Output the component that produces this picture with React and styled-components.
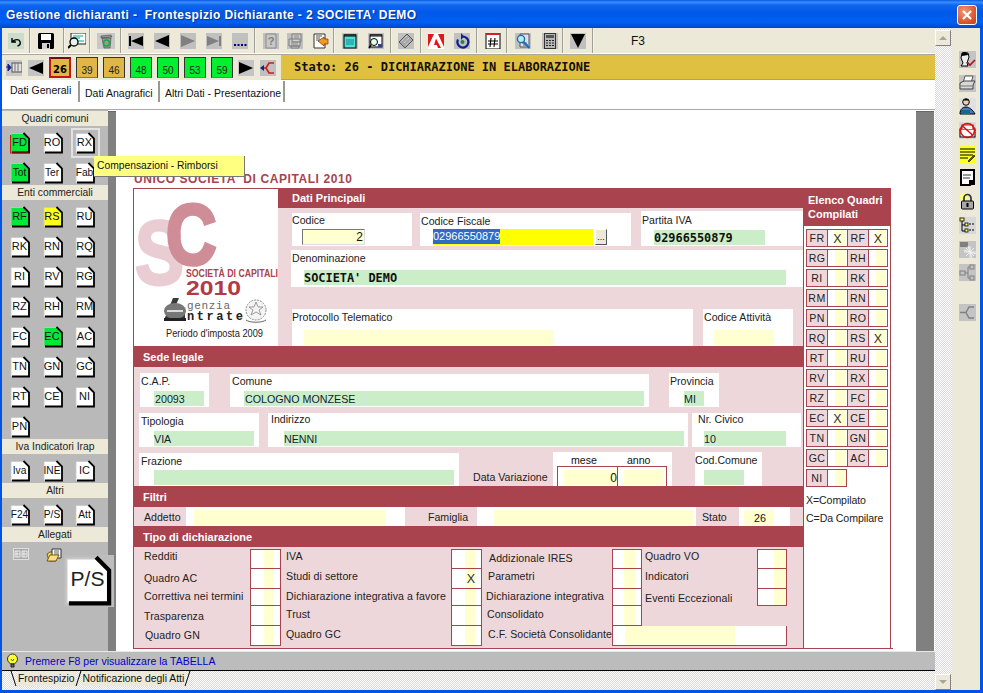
import React from "react";
import styled, { createGlobalStyle, css } from "styled-components";

const RED = "#a9434d";
const PINK = "#eed7da";
const GREEN = "#cbedc8";
const PALE = "#ffffcf";
const BEIGE = "#ece9d8";
const dither = "repeating-conic-gradient(#ffffff 0 25%, #dcdac8 0 50%) 0 0 / 2px 2px";

const Global = createGlobalStyle`
  html, body { margin: 0; padding: 0; background: #0054e3; }
  * { box-sizing: border-box; }
  body { font-family: "Liberation Sans", Arial, sans-serif; font-size: 10.6px; color: #111; }
`;

const Window = styled.div`
  width: 983px; height: 693px; display: flex; flex-direction: column; overflow: hidden;
  background: #0054e3; position: relative;
`;
const TitleBar = styled.div`
  height: 28px; flex: none; display: flex; align-items: center; justify-content: space-between;
  padding: 1px 6px 0 6px;
  background: linear-gradient(180deg, #0a5ae8 0, #3a8ffb 8%, #0f66ee 18%, #0058e8 45%, #0060f2 80%, #0246c8 100%);
`;
const TitleText = styled.div`
  color: #fff; font-weight: bold; font-size: 12px; letter-spacing: .39px; white-space: pre;
  text-shadow: 1px 1px 1px #0a2e9a;
`;
const CloseBtn = styled.div`
  width: 20px; height: 20px; border: 1px solid #fff; border-radius: 3px; display: grid; place-items: center;
  background: radial-gradient(circle at 35% 30%, #f09a78, #dd5a32 60%, #c23c1a);
`;
const Body = styled.div`
  flex: 1; display: flex; padding: 0 3px 3px 2px; min-height: 0;
`;
const Main = styled.div`
  width: 933px; display: flex; flex-direction: column; background: ${BEIGE};
`;
const ScrollTrack = styled.div`
  width: 17px; display: flex; flex-direction: column; justify-content: space-between;
  background: ${dither}; padding-top: 2px; padding-bottom: 0;
`;
const ScrollBtn = styled.div`
  width: 16px; height: 16px; background: ${BEIGE}; display: grid; place-items: center;
  border: 1px solid; border-color: #fff #808080 #808080 #fff;
`;
const Arrow = styled.div`
  width: 0; height: 0; border-left: 4px solid transparent; border-right: 4px solid transparent;
  ${p => p.$down ? css`border-top: 4px solid #a8a898;` : css`border-bottom: 4px solid #a8a898;`}
`;
const RightBar = styled.div`
  width: 28px; background: ${BEIGE}; display: flex; flex-direction: column; align-items: center;
  padding: 23px 0 0 2px; gap: 6.7px;
`;
const RightGap = styled.div` height: 9px; `;

const Toolbar = styled.div`
  height: 27px; flex: none; display: flex; align-items: flex-start; background: ${BEIGE};
  border-bottom: 1px solid #aca899; box-shadow: inset 0 -1px 0 #fff;
`;
const ToolGroup = styled.div`
  width: ${p => p.$w}px; height: 25px; padding-left: ${p => p.$pl}px; display: flex; align-items: center; gap: ${p => p.$gap || 0}px;
  border-right: 2px groove #f4f2e8;
`;
const FKey = styled.div` margin-left: 37px; height: 25px; display: flex; align-items: center; font-size: 12px; padding-top: 1px; `;

const NavRow = styled.div`
  height: 25px; flex: none; display: flex; align-items: center; padding-left: 4px; background: ${BEIGE};
`;
const NavSlot = styled.div` margin-left: ${p => p.$ml}px; display: flex; `;
const StepTile = styled.div`
  width: 22px; height: 21px; margin-left: ${p => p.$ml}px; display: flex; align-items: flex-end; justify-content: center;
  font-size: 10px; padding-bottom: 1px; color: #222;
  border: 1px solid #333; border-bottom-color: #777;
  background: ${p => p.$green ? "#00f030" : "#e0b646"};
  ${p => p.$on && css`border: 2px solid #c01818; border-top-color:#6a1010; font-weight: bold; color: #000; font-family: "DejaVu Sans", sans-serif;`}
`;
const StatusStrip = styled.div`
  flex: 1; height: 25px; margin-left: 5px; background: #e0c040; border-bottom: 1px solid #a8a080;
  font: bold 12px "DejaVu Sans Mono", monospace; color: #111; display: flex; align-items: center; padding-left: 13px;
  white-space: pre;
`;
const TabStrip = styled.div`
  height: 30px; flex: none; background: #fff; display: flex; padding-left: 2px; padding-top: 1px; align-items: flex-start;
  border-bottom: 1px solid #a8a8a8;
`;
const Tab = styled.div`
  width: ${p => p.$w}px; height: 21px; font-size: 10.5px; white-space: nowrap;
  padding: ${p => p.$on ? "3px 0 0 6px" : "6px 0 0 5px"};
  border-right: 2px solid #9a9a8e;
`;

const Workspace = styled.div`
  flex: 1; display: flex; position: relative; min-height: 0; background: #fff;
`;
const Sidebar = styled.div`
  width: 106px; flex: none; background: #b9b9b9; padding-top: 1px; position: relative; display: flex; flex-direction: column;
`;
const SideHead = styled.div`
  height: 15px; background: ${BEIGE}; text-align: center; font-size: 10.3px; line-height: 15px; color: #222;
`;
const SideGrid = styled.div`
  display: grid; grid-template-columns: repeat(3, 32.5px); column-gap: 0; row-gap: 8px; padding: 6px 0 1px 8px;
`;
const Tile = styled.div`
  width: 21px; height: 22px; display: grid; place-items: center; font-size: ${p => p.$small ? 10.2 : 11}px; color: #111;
  ${p => p.$hover && css`outline: 2px solid #e2e2e2; outline-offset: 2px;`}
  & > * { grid-area: 1 / 1; }
`;
const TileLabel = styled.span` padding: 0 2px 2px 0; white-space: nowrap; `;
const AttachRow = styled.div` display: flex; gap: 16px; padding: 6px 0 0 11px; `;
const BigPS = styled.div`
  position: absolute; left: 62px; top: 445px; width: 50px; height: 52px; background: #bdbdbd; z-index: 3;
  display: grid; place-items: center;
  & > * { grid-area: 1 / 1; }
`;
const BigLabel = styled.span` font-size: 21px; font-weight: 500; color: #222; padding: 0 3px 4px 0; `;
const Tooltip = styled.div`
  position: absolute; left: 92px; top: 46px; width: 151px; height: 21px; background: #ffff80; z-index: 4;
  border-bottom: 1px solid #777; border-right: 1px solid #777; font-size: 10.3px; padding: 4px 0 0 3px; white-space: nowrap;
`;
const Gutter = styled.div`
  width: ${p => p.$w}px; flex: none; background: #808080; margin-top: 1px; border-top: 1px solid #666;
`;
const Page = styled.div`
  width: 800px; flex: none; background: #fff; padding: 60px 0 0 17px; overflow: hidden;
`;
const DocTitle = styled.div`
  height: 18px; font-weight: bold; font-size: 12px; letter-spacing: .58px; color: ${RED}; line-height: 18px; padding-left: 1px; white-space: nowrap;
`;
const Form = styled.div`
  width: 760px; height: 461px; display: flex; border-bottom: 1px solid ${RED};
`;
const LeftCol = styled.div`
  width: 670px; flex: none; background: ${PINK}; display: flex; flex-direction: column; border-left: 1px solid ${RED};
`;
const TopBlock = styled.div` height: 158px; display: flex; flex: none; `;
const LogoCell = styled.div`
  width: 144px; flex: none; background: #fff; border-top: 1px solid ${RED}; display: flex;
`;
const Principal = styled.div` flex: 1; display: flex; flex-direction: column; `;
const SectionBar = styled.div`
  height: ${p => p.$h}px; flex: none; background: ${RED}; color: #fff; font-weight: bold; font-size: 11px;
  display: flex; align-items: center; padding-left: ${p => p.$pl}px;
`;
const FieldRow = styled.div`
  display: flex; align-items: flex-end; flex: none; height: ${p => p.$h}px; margin-top: ${p => p.$mt || 0}px;
`;
const FieldBox = styled.div`
  width: ${p => p.$w}px; height: ${p => p.$h}px; margin-left: ${p => p.$ml}px; flex: none; background: #fff;
  display: flex; flex-direction: column; justify-content: space-between; padding-bottom: ${p => p.$pb ?? 1}px;
`;
const FieldLabel = styled.div` padding: ${p => p.$pt ?? 2}px 0 0 ${p => p.$pl ?? 1}px; line-height: 13px; white-space: nowrap; color: #222;`;
const ValueBar = styled.div`
  width: ${p => p.$w}px; height: 15px; margin-left: ${p => p.$ml}px; flex: none;
  background: ${p => p.$tone === "y" ? PALE : GREEN};
  padding-left: ${p => p.$pl || 0}px; white-space: nowrap; line-height: 16px; font-size: 10.7px; color: #123;
`;
const BoldValue = styled(ValueBar)`
  font: bold 11.9px/16px "DejaVu Sans Mono", monospace; color: #111;
`;
const CodeRow = styled.div` display: flex; align-items: flex-end; `;
const CodeInput = styled.div`
  width: 63px; height: 16px; margin-left: 10px; background: ${PALE}; border: 1px solid; border-color: #777 #ddd #ddd #777;
  text-align: right; padding-right: 1px; font-size: 12px; line-height: 15px;
`;
const FiscalRow = styled.div` display: flex; align-items: center; padding-left: 13px; `;
const FiscalInput = styled.div`
  width: 160px; height: 16px; background: #ffff00; display: flex;
`;
const Selected = styled.span`
  background: #316ac5; color: #fff; font-size: 11px; line-height: 15px; height: 15px;
`;
const PickBtn = styled.div`
  width: 12px; height: 16px; margin-left: 2px; background: ${BEIGE}; border: 1px solid; border-color: #fff #555 #555 #fff;
  font-size: 9px; text-align: center; line-height: 14px;
`;
const InlineLabel = styled.div`
  width: ${p => p.$w}px; margin-left: ${p => p.$ml}px; flex: none; white-space: nowrap; padding-bottom: ${p => p.$pb || 0}px; color:#222;
`;
const DateHeads = styled.div` display: flex; padding: 3px 0 0 18px; line-height: 11px; gap: 30px; `;
const DateTable = styled.div`
  width: 110px; height: 20px; margin-left: 4px; display: flex; border: 1px solid ${RED}; border-bottom: none;
`;
const DateCell = styled.div`
  width: ${p => p.$w}px; flex: none; padding: 3px 0 1px ${p => p.$pl}px; ${p => p.$div && `border-right: 1px solid ${RED};`}
`;
const DateFill = styled.div`
  height: 15px; width: ${p => p.$w}px; background: ${PALE}; text-align: right; font-size: 12px; line-height: 17px;
`;
const FilterRow = styled.div` height: 19px; display: flex; align-items: stretch; flex: none; `;
const FilterCell = styled.div`
  width: ${p => p.$w}px; background: #fff; padding: 3px 0 1px ${p => p.$pl}px; flex: none; margin-left: ${p => p.$ml || 0}px;
`;
const FilterFill = styled.div`
  width: ${p => p.$w}px; height: 15px; background: ${PALE}; font-size: 10.7px; line-height: 17px; padding-left: ${p => p.$pl || 0}px;
`;
const FilterLabel = styled.div`
  width: ${p => p.$w}px; margin-left: ${p => p.$ml}px; flex: none; line-height: 20px; color: #222;
`;
const TipoGrid = styled.div`
  display: grid; padding-top: 2px;
  grid-template-columns: 116px 31px 170px 31px 130px 30px 115px 30px;
  grid-template-rows: 20px 20px 17px 20px 20px;
`;
const TipoLabel = styled.div`
  padding-left: ${p => p.$pl}px; margin-top: ${p => p.$dy || 0}px; display: flex; align-items: center; white-space: nowrap; color:#222; letter-spacing: .08px;
`;
const TipoBox = styled.div`
  border: 1px solid ${RED}; border-top: ${p => p.$first ? `1px solid ${RED}` : "none"}; font-size: 12.5px; line-height: 21px; text-align: center; padding-left: 9px; color: #333;
  ${p => p.$wide && "grid-column: 6 / 9;"}
  background: linear-gradient(90deg, #fff ${p => p.$a}px, ${PALE} ${p => p.$a}px, ${PALE} ${p => p.$b}px, #fff ${p => p.$b}px);
`;
const TipoGap = styled.div` grid-column: 7 / 9; `;
const Elenco = styled.div`
  width: 88px; flex: none; border-left: 1px solid ${RED}; border-right: 1px solid ${RED}; background: #fff; display: flex; flex-direction: column; margin-right: 2px;
`;
const ElencoHead = styled.div`
  height: 38px; background: ${RED}; color: #fff; font-weight: bold; font-size: 11px; line-height: 14px; padding: 5px 0 0 4px;
`;
const ElencoRows = styled.div` display: flex; flex-direction: column; gap: 2px; padding: 3px 0 0 2px; `;
const ElencoRow = styled.div` display: flex; height: 18px; `;
const CodeCell = styled.div`
  width: 21px; height: 18px; background: ${PINK}; border: 1px solid ${RED}; border-right: none; line-height: 16px; text-align: center; letter-spacing: .4px; color:#222;
`;
const MarkCell = styled.div`
  width: 20px; height: 18px; border: 1px solid ${RED}; border-right: ${p => p.$close ? `1px solid ${RED}` : "none"};
  background: linear-gradient(90deg, #fff 7px, ${PALE} 7px, ${PALE} 17px, #fff 17px);
  font-size: 12.5px; line-height: 18px; text-align: center; color: #333;
`;
const Legend = styled.div` padding-left: 2px; line-height: 18px; margin-top: ${p => p.$mt}px; color:#222; letter-spacing: -.1px; `;
const HintBar = styled.div`
  height: 19px; flex: none; background: #bcbcbc; display: flex; align-items: center; padding-left: 4px; gap: 6px;
  border-top: 1px solid #e8e8e8; color: #0000c8; font-size: 10.5px;
`;
const DocTabs = styled.div`
  flex: none; background: ${dither}; border-top: 1px solid #000; display: flex; padding-left: 9px; align-items: flex-start; height: 20px;
`;
const DocTab = styled.div` font-size: 10.4px; line-height: 15px; padding: 0 1px; white-space: nowrap; height: 15px; background: ${BEIGE}; `;
const Slant = styled.div`
  width: 1px; height: 15px; background: #000; margin: 0 3px 0 2px; transform: skewX(${p => p.$deg}deg);
`;
const SvgBox = styled.svg` display: block; flex: none; `;

const Ic = ({ children, w = 16, h = 16 }) => (
  <SvgBox width={w} height={h} viewBox={`0 0 ${w} ${h}`}>{children}</SvgBox>
);
const GB = ({ c = "#c0c0c0" }) => <rect width="16" height="16" fill={c} />;

const I = {
  undo: <Ic><GB c="#cbdccc" /><path d="M4 5v4h4M4.5 8.5C7 6 11 6 12 8.5 13 11 11.5 12.5 9.5 13" fill="none" stroke="#000" strokeWidth="1.4" /></Ic>,
  save: <Ic><rect x="0" y="0" width="16" height="16" rx="1.5" fill="#000" /><rect x="3" y="1" width="10" height="6" fill="#fff" /><rect x="4" y="10" width="8" height="6" fill="#d0d0d0" /><rect x="9" y="11" width="2" height="4" fill="#000" /></Ic>,
  preview: <Ic w={18}><rect x="3" y="0" width="15" height="11" fill="#fff" stroke="#222" /><path d="M5 3h10M5 5h7M10 8h6" stroke="#0a8" /><circle cx="6" cy="9" r="4" fill="#e8f0f0" stroke="#000" strokeWidth="1.3" /><path d="M3 12l-3 3" stroke="#000" strokeWidth="2" /></Ic>,
  bin: <Ic w={18}><rect width="18" height="16" fill="#c8c8c8" /><path d="M4 3l10-1 1 2-11 1zM5 5h9l-1 10H7z" fill="#9a9a9a" stroke="#444" strokeWidth=".6" /><circle cx="9.5" cy="10" r="3" fill="none" stroke="#19a93c" strokeWidth="1.6" /></Ic>,
  first: <Ic><GB /><rect x="1" y="3" width="2" height="10" fill="#000" /><path d="M3 8L15 3v10z" fill="#000" /></Ic>,
  prev: <Ic><GB /><path d="M1 8l14-6v12z" fill="#000" /></Ic>,
  next: <Ic><GB /><path d="M15 8L1 2v12z" fill="#808080" /></Ic>,
  last: <Ic><GB /><path d="M13 8L1 3v10z" fill="#808080" /><rect x="13" y="3" width="2" height="10" fill="#808080" /></Ic>,
  dots: <Ic><GB /><path d="M2 11h2v2H2zM5.5 11h2v2h-2zM9 11h2v2H9zM12.5 11h2v2h-2z" fill="#000070" /></Ic>,
  help: <Ic><GB /><path d="M3 1h10v14H3z" fill="#c8c8c8" stroke="#8a8a8a" /><text x="8" y="12" fontSize="11" fontFamily="Liberation Sans" fontWeight="bold" fill="#808080" textAnchor="middle">?</text></Ic>,
  print: <Ic><GB /><path d="M5 1h9v8H5zM2 6h11v7H2zM4 13h8v2H4z" fill="#cfcfcf" stroke="#7c7c7c" /><path d="M7 3h5M7 5h5M4 9h7M4 11h7" stroke="#8a8a8a" /></Ic>,
  sum: <Ic w={18}><path d="M3 1h11v14H3z" fill="#fff" stroke="#333" /><path d="M5 3h6M5 5h4M5 7h7" stroke="#555" /><path d="M7 8l6-4v2h4v5h-4v2z" fill="#f09a20" stroke="#803000" strokeWidth=".7" /></Ic>,
  pad: <Ic><GB /><rect x="2" y="2" width="12" height="13" fill="#4fe0d8" stroke="#000" /><path d="M3 1v3M5 1v3M7 1v3M9 1v3M11 1v3M13 1v3" stroke="#000" /><path d="M4 7h8M4 9h8M4 11h8" stroke="#0a8a8a" /></Ic>,
  pad2: <Ic><GB /><rect x="2" y="2" width="12" height="12" fill="#fff" stroke="#000" /><path d="M3 1v3M5 1v3M7 1v3M9 1v3M11 1v3M13 1v3" stroke="#000" /><circle cx="6" cy="9" r="3.5" fill="#dfe" stroke="#000" /><path d="M3 12l-2 3" stroke="#000" strokeWidth="1.6" /><path d="M10 11h4v3h-4z" fill="#3040a0" /></Ic>,
  keys: <Ic><GB /><path d="M1 9l8-8 6 6-8 8z" fill="#a8a8a8" stroke="#555" /><path d="M4 8l5-5M6 10l5-5M8 12l4-4" stroke="#ddd" strokeDasharray="1 1" /></Ic>,
  acro: <Ic><rect width="16" height="16" fill="#fff" /><path d="M0 1h6L0 14zM10 1h6v13zM8 5.500L13 15h-3l-1.200-3H6l2-6.500z" fill="#e01818" /></Ic>,
  refresh: <Ic><GB /><path d="M9 3.5a5.5 5.5 0 1 1-5 3" fill="none" stroke="#101c90" strokeWidth="2.2" /><path d="M7 0v7l3-3.5z" fill="#101c90" /><circle cx="8.5" cy="9" r="2" fill="#1a8a3a" /></Ic>,
  hash: <Ic><rect x="1" y="0" width="14" height="16" fill="#fff" stroke="#000" /><rect x="1" y="0" width="14" height="2" fill="#d02020" /><path d="M6 5L5 14M10 5L9 14M3 8h10M3 11h10" stroke="#000" strokeWidth="1.1" /></Ic>,
  find: <Ic><GB /><path d="M5 1h9v13H5z" fill="#e0e0f0" stroke="#555" /><path d="M7 10h5M8 12h5" stroke="#555" /><circle cx="6" cy="6" r="3.6" fill="#b8e8ff" stroke="#207090" strokeWidth="1.4" /><path d="M8.5 9l6 6" stroke="#1070c8" strokeWidth="2" /></Ic>,
  calc: <Ic><GB /><rect x="2.5" y="0.5" width="11" height="15" fill="#b8b8b8" stroke="#333" /><rect x="4" y="2" width="8" height="3" fill="#555" /><path d="M4 7h2v1H4zM7 7h2v1H7zM10 7h2v1h-2zM4 9.500h2v1H4zM7 9.500h2v1H7zM10 9.500h2v1h-2zM4 12h2v1H4zM7 12h2v1H7zM10 12h2v1h-2z" fill="#222" /></Ic>,
  down: <Ic><GB /><path d="M1 1h14L8 15z" fill="#000" /></Ic>,
  cols: <Ic><rect width="16" height="16" fill="#c8c8c8" /><rect x="6" y="3" width="10" height="9" fill="#e0e0e0" stroke="#555" /><path d="M9 3v9M12 3v9" stroke="#777" /><path d="M0 7h4M2 4l3 3.500-3 3.500z" fill="#10208a" stroke="#10208a" /></Ic>,
  prevB: <Ic><GB c="#c4c4c4" /><path d="M1 8l14-6v12z" fill="#000" /></Ic>,
  nextB: <Ic><GB c="#c4c4c4" /><path d="M15 8L1 2v12z" fill="#000" /></Ic>,
  fork: <Ic><GB /><path d="M1 8h5M14 3H9L6 8l3 5h5" fill="none" stroke="#d01818" strokeWidth="1.6" /><path d="M0 8l4-3v6z" fill="#10208a" /></Ic>,
  userCheck: <Ic w={17} h={17}><rect width="17" height="17" fill="#c4c4c4" /><path d="M3 2h6l1 4-2 6 1 3H2l2-3-2-5z" fill="#eee" stroke="#000" /><path d="M3 2c2-2 6-1 6 2l-6 1z" fill="#000" /><path d="M8 11l3 3 5-5" fill="none" stroke="#b01010" strokeWidth="1.6" /></Ic>,
  printer: <Ic w={17} h={17}><rect width="17" height="17" fill="#c4c4c4" /><path d="M6 1h8l-2 7H4z" fill="#fff" stroke="#555" /><path d="M1 8l4-2h11l-2 4v4H1z" fill="#d8d8d8" stroke="#444" /><path d="M1 11h13" stroke="#777" /></Ic>,
  person: <Ic w={17} h={17}><rect width="17" height="17" fill="#e0e0e0" /><circle cx="7" cy="4" r="3.300" fill="#e8d0b0" stroke="#000" /><path d="M4 2.500c2-2 5-2 6 0H4z" fill="#000" /><path d="M1 16c0-5 3-7 6-7s7 3 9 7z" fill="#4a78c8" stroke="#000" /><rect x="2" y="12" width="9" height="4" fill="#107080" /></Ic>,
  noMail: <Ic w={17} h={17}><rect width="17" height="17" fill="#d8d8d8" /><rect x="1" y="7" width="15" height="8" fill="#fff" stroke="#000" /><path d="M3 7V3h11v4" fill="#fff" stroke="#c01010" strokeWidth="1.2" /><circle cx="8.500" cy="8.500" r="7" fill="none" stroke="#e01010" strokeWidth="1.6" /><path d="M3 3.500l11 10" stroke="#e01010" strokeWidth="1.6" /></Ic>,
  notes: <Ic w={17} h={17}><rect width="17" height="17" fill="#ffff20" /><path d="M1 3h15M1 6h15M1 9h13M1 12h8" stroke="#000" /><path d="M9 15l6-6 1 1-6 6z" fill="#555" stroke="#000" strokeWidth=".6" /></Ic>,
  docBlack: <Ic w={17} h={17}><path d="M2 1h13v11l-4 4H2z" fill="#fff" stroke="#000" strokeWidth="2" /><path d="M4 6h8M4 9h7" stroke="#333" /><path d="M10 11h6v5h-6z" fill="#000" /></Ic>,
  lock: <Ic w={17} h={17}><circle cx="5" cy="4" r="3.800" fill="#ffff70" /><path d="M5 8V5a3.500 3.500 0 0 1 7 0v3" fill="none" stroke="#333" strokeWidth="1.7" /><rect x="2.500" y="8" width="12" height="8" rx="1" fill="#a8a8a8" stroke="#000" /><path d="M8.500 10v4" stroke="#000" strokeWidth="2" /></Ic>,
  tree: <Ic w={17} h={17}><rect width="17" height="17" fill="#d8d8d8" /><path d="M3 3v11M3 8h4M3 14h4" stroke="#000" /><rect x="1" y="1" width="4" height="3" fill="#ffff50" stroke="#000" strokeWidth=".8" /><rect x="6" y="6" width="3" height="3" fill="#ffff50" stroke="#000" strokeWidth=".8" /><rect x="6" y="12" width="3" height="3" fill="#ffff50" stroke="#000" strokeWidth=".8" /><path d="M10 7h6M10 13h6" stroke="#000" strokeDasharray="2 1" /></Ic>,
  burst: <Ic w={17} h={17}><rect width="17" height="17" fill="#c4c4c4" /><rect x="1" y="1" width="8" height="5" fill="#808080" /><path d="M11 5v12M5 11h12M7 7l8 8M15 7l-8 8M9 5l4 12M5 9l12 4" stroke="#f0f0f0" /></Ic>,
  treeOff: <Ic w={17} h={17}><rect width="17" height="17" fill="#c4c4c4" /><rect x="1" y="7" width="5" height="4" fill="none" stroke="#808080" /><rect x="11" y="1" width="4" height="4" fill="none" stroke="#808080" /><rect x="11" y="12" width="4" height="4" fill="none" stroke="#808080" /><path d="M6 9h3M9 3v11h2M9 3h2" stroke="#808080" fill="none" /></Ic>,
  forkOff: <Ic w={17} h={17}><rect width="17" height="17" fill="#c4c4c4" /><path d="M1 8.500h6M15 3h-5L7 8.500l3 5.500h5" fill="none" stroke="#808080" strokeWidth="1.4" /></Ic>,
  folder: <Ic w={18} h={14}><path d="M1 6l3-2h4v2h2v7H3z" fill="#f0d060" stroke="#604000" strokeWidth=".8" /><path d="M6 1h9v9H6z" fill="#fff" stroke="#303030" /><path d="M8 3h5M8 5h5M8 7h5" stroke="#606060" /><path d="M1 13l3-6h9l-3 6z" fill="#f8e080" stroke="#604000" strokeWidth=".8" /></Ic>,
  panel: <Ic w={17} h={12}><rect x=".5" y=".5" width="15" height="11" fill="#a8a8a8" stroke="#e0e0e0" /><path d="M2 3h5v6H2zM9 3h5v6H9z" fill="none" stroke="#eee" /><path d="M2 6h5M9 6h5M4 3v6M11 3v6" stroke="#eee" /></Ic>,
};

const toolGroups = [
  { w: 29, pl: 6, k: ["undo"] },
  { w: 34, pl: 7, k: ["save"] },
  { w: 26, pl: 3, k: ["preview"] },
  { w: 31, pl: 6, k: ["bin"] },
  { w: 134, pl: 6, gap: 10, k: ["first", "prev", "next", "last", "dots"] },
  { w: 79, pl: 7, gap: 8, k: ["help", "print", "sum"] },
  { w: 57, pl: 7, gap: 10, k: ["pad", "pad2"] },
  { w: 30, pl: 6, k: ["keys"] },
  { w: 56, pl: 6, gap: 10, k: ["acro", "refresh"] },
  { w: 30, pl: 7, k: ["hash"] },
  { w: 56, pl: 7, gap: 11, k: ["find", "calc"] },
  { w: 30, pl: 6, k: ["down"] },
];
const steps = [["26", 0, 1], ["39", 0, 0], ["46", 0, 0], ["48", 1, 0], ["50", 1, 0], ["53", 1, 0], ["59", 1, 0]];

const TileIcon = ({ fill = "#fff", mark, big }) => (
  <SvgBox width={big ? 50 : 21} height={big ? 52 : 22} viewBox="0 0 21 22">
    <path d="M1 1.500H13.500L19 7V20.500H1Z" fill={fill} stroke="#c8c8c8" strokeWidth=".8" />
    <path d="M13.500 1L19 6.500V20.500H2" fill="none" stroke="#000" strokeWidth="1.800" />
    {mark && <path d="M.6 3V21H19" fill="none" stroke="#d01818" strokeWidth="1.200" />}
  </SvgBox>
);
const SideTile = ({ t, fill, mark, hover }) => (
  <Tile $hover={hover} $small={t.length > 2}>
    <TileIcon fill={fill} mark={mark} />
    <TileLabel>{t}</TileLabel>
  </Tile>
);
const G1 = "#00e838";
const Y1 = "#ffff20";
const sidebar = [
  ["Quadri comuni", [["FD", G1, 1], ["RO"], ["RX", null, 0, 1], ["Tot", G1], ["Ter"], ["Fab"]]],
  ["Enti commerciali", [["RF", G1], ["RS", Y1], ["RU"], ["RK"], ["RN"], ["RQ"], ["RI"], ["RV"], ["RG"], ["RZ"], ["RH"], ["RM"], ["FC"], ["EC", G1], ["AC"], ["TN"], ["GN"], ["GC"], ["RT"], ["CE"], ["NI"], ["PN"]]],
  ["Iva Indicatori Irap", [["Iva"], ["INE"], ["IC"]]],
  ["Altri", [["F24"], ["P/S"], ["Att"]]],
];

const elenco = [
  ["FR", 1, "RF", 1], ["RG", 0, "RH", 0], ["RI", 0, "RK", 0], ["RM", 0, "RN", 0], ["PN", 0, "RO", 0],
  ["RQ", 0, "RS", 1], ["RT", 0, "RU", 0], ["RV", 0, "RX", 0], ["RZ", 0, "FC", 0], ["EC", 1, "CE", 0],
  ["TN", 0, "GN", 0], ["GC", 0, "AC", 0], ["NI", 0],
];

const tipo = [
  [["Redditi", 10, -6], ["IVA", 5, -6], ["Addizionale IRES", 7, -2], ["Quadro VO", 3, -6]],
  [["Quadro AC", 10, -2], ["Studi di settore", 5, -6, 1], ["Parametri", 6, -6], ["Indicatori", 3, -6]],
  [["Correttiva nei termini", 10, -3], ["Dichiarazione integrativa a favore", 5, -3], ["Dichiarazione integrativa", 4, -3], ["Eventi Eccezionali", 3, 0]],
  [["Trasparenza", 10, 0], ["Trust", 5, -5], ["Consolidato", 5, -5], null],
  [["Quadro GN", 11, -2], ["Quadro GC", 5, -4], ["C.F. Società Consolidante", 6, -4]],
];
const stripes = [[13, 23], [13, 23], [11, 22], [16, 27]];

const Logo = () => (
  <SvgBox width="144" height="157" viewBox="0 0 144 157">
    <g fontFamily="Liberation Sans" fontWeight="bold">
      <text transform="translate(1 95) scale(.8 .98)" fontSize="92" fill="#e9cdd3" stroke="#e9cdd3" strokeWidth="3">S</text>
      <text transform="translate(32 75) scale(.76 .92)" fontSize="92" fill="#cf8d98" stroke="#cf8d98" strokeWidth="4">C</text>
      <text x="52" y="88" fontSize="10.500" textLength="92" lengthAdjust="spacingAndGlyphs" fill={RED}>SOCIETÀ DI CAPITALI</text>
      <text x="52" y="106" fontSize="21" textLength="55" lengthAdjust="spacingAndGlyphs" fill="#b03a48">2010</text>
    </g>
    <path d="M30 131L39 109h6l-7 16h13v6z" fill="#3a3a3a" />
    <ellipse cx="41" cy="122" rx="11" ry="8" fill="#777" />
    <path d="M33 122h16" stroke="#fff" strokeWidth="1.500" />
    <rect x="30" y="129" width="22" height="3" fill="#222" />
    <g fontFamily="Liberation Mono" fill="#444">
      <text x="53" y="120" fontSize="11" textLength="43" fill="#666">genzia</text>
      <text x="53" y="131" fontSize="12" fontWeight="bold" textLength="56" fill="#222">ntrate</text>
    </g>
    <circle cx="122" cy="121" r="10" fill="#f4f4f4" stroke="#888" strokeDasharray="2 1" />
    <path d="M122 113l2 5h5l-4 3 2 5-5-3-5 3 2-5-4-3h5z" fill="none" stroke="#777" strokeWidth=".7" />
    <path d="M112 131c4 3 16 3 20 0" fill="none" stroke="#666" />
    <text x="32" y="148" fontSize="10" fontFamily="Liberation Sans" fill="#222" textLength="97" lengthAdjust="spacingAndGlyphs">Periodo d'imposta 2009</text>
  </SvgBox>
);

export default function App() {
  return (
    <Window>
      <Global />
      <TitleBar>
        <TitleText>{"Gestione dichiaranti -  Frontespizio Dichiarante - 2 SOCIETA' DEMO"}</TitleText>
        <CloseBtn>
          <svg width="12" height="12" viewBox="0 0 12 12"><path d="M2 2l8 8M10 2l-8 8" stroke="#fff" strokeWidth="2.200" /></svg>
        </CloseBtn>
      </TitleBar>
      <Body>
        <Main>
          <Toolbar>
            {toolGroups.map((g, i) => (
              <ToolGroup key={i} $w={g.w} $pl={g.pl} $gap={g.gap}>
                {g.k.map(k => <React.Fragment key={k}>{I[k]}</React.Fragment>)}
              </ToolGroup>
            ))}
            <FKey>F3</FKey>
          </Toolbar>
          <NavRow>
            {I.cols}
            <NavSlot $ml={6}>{I.prevB}</NavSlot>
            {steps.map(([n, g, on]) => (
              <StepTile key={n} $green={g} $on={on} $ml={5}>{n}</StepTile>
            ))}
            <NavSlot $ml={5}>{I.nextB}</NavSlot>
            <NavSlot $ml={6}>{I.fork}</NavSlot>
            <StatusStrip>{"Stato: 26 - DICHIARAZIONE IN ELABORAZIONE"}</StatusStrip>
          </NavRow>
          <TabStrip>
            <Tab $w={76} $on>Dati Generali</Tab>
            <Tab $w={80}>Dati Anagrafici</Tab>
            <Tab $w={125}>Altri Dati - Presentazione</Tab>
          </TabStrip>
          <Workspace>
            <Sidebar>
              {sidebar.map(([h, items]) => (
                <React.Fragment key={h}>
                  <SideHead>{h}</SideHead>
                  <SideGrid>
                    {items.map(([t, f, m, hv]) => (
                      <SideTile key={t} t={t} fill={f || "#fff"} mark={m} hover={hv} />
                    ))}
                  </SideGrid>
                </React.Fragment>
              ))}
              <SideHead>Allegati</SideHead>
              <AttachRow>{I.panel}{I.folder}</AttachRow>
              <BigPS>
                <TileIcon big />
                <BigLabel>P/S</BigLabel>
              </BigPS>
            </Sidebar>
            <Gutter $w={8} />
            <Page>
              <DocTitle>UNICO SOCIETA' DI CAPITALI 2010</DocTitle>
              <Form>
                <LeftCol>
                  <TopBlock>
                    <LogoCell><Logo /></LogoCell>
                    <Principal>
                      <SectionBar $h={20} $pl={14}>Dati Principali</SectionBar>
                      <FieldRow $h={38}>
                        <FieldBox $w={120} $h={33} $ml={14}>
                          <FieldLabel $pt={1} $pl={0}>Codice</FieldLabel>
                          <CodeRow><CodeInput>2</CodeInput></CodeRow>
                        </FieldBox>
                        <FieldBox $w={211} $h={33} $ml={8}>
                          <FieldLabel>Codice Fiscale</FieldLabel>
                          <FiscalRow>
                            <FiscalInput><Selected>02966550879</Selected></FiscalInput>
                            <PickBtn>...</PickBtn>
                          </FiscalRow>
                        </FieldBox>
                        <FieldBox $w={162} $h={35} $ml={10}>
                          <FieldLabel $pt={3}>Partita IVA</FieldLabel>
                          <BoldValue $w={111} $ml={13}>02966550879</BoldValue>
                        </FieldBox>
                      </FieldRow>
                      <FieldRow $h={37} $mt={4}>
                        <FieldBox $w={512} $h={37} $ml={13} $pb={2}>
                          <FieldLabel $pt={2} $pl={1}>Denominazione</FieldLabel>
                          <BoldValue $w={482} $ml={13}>SOCIETA' DEMO</BoldValue>
                        </FieldBox>
                      </FieldRow>
                      <FieldRow $h={37} $mt={22}>
                        <FieldBox $w={401} $h={37} $ml={14}>
                          <FieldLabel $pl={0}>Protocollo Telematico</FieldLabel>
                          <ValueBar $tone="y" $w={250} $ml={12} />
                        </FieldBox>
                        <FieldBox $w={90} $h={37} $ml={10}>
                          <FieldLabel>Codice Attività</FieldLabel>
                          <ValueBar $tone="y" $w={60} $ml={11} />
                        </FieldBox>
                      </FieldRow>
                    </Principal>
                  </TopBlock>
                  <SectionBar $h={21} $pl={9}>Sede legale</SectionBar>
                  <FieldRow $h={34} $mt={6}>
                    <FieldBox $w={69} $h={34} $ml={6}>
                      <FieldLabel>C.A.P.</FieldLabel>
                      <ValueBar $w={50} $ml={14} $pl={1}>20093</ValueBar>
                    </FieldBox>
                    <FieldBox $w={419} $h={33} $ml={21}>
                      <FieldLabel $pt={1} $pl={2}>Comune</FieldLabel>
                      <ValueBar $w={400} $ml={14} $pl={1}>COLOGNO MONZESE</ValueBar>
                    </FieldBox>
                    <FieldBox $w={50} $h={34} $ml={20}>
                      <FieldLabel>Provincia</FieldLabel>
                      <ValueBar $w={20} $ml={15}>MI</ValueBar>
                    </FieldBox>
                  </FieldRow>
                  <FieldRow $h={34} $mt={6}>
                    <FieldBox $w={120} $h={34} $ml={5}>
                      <FieldLabel $pt={2} $pl={2}>Tipologia</FieldLabel>
                      <ValueBar $w={100} $ml={15}>VIA</ValueBar>
                    </FieldBox>
                    <FieldBox $w={420} $h={34} $ml={9}>
                      <FieldLabel $pt={0} $pl={3}>Indirizzo</FieldLabel>
                      <ValueBar $w={400} $ml={16}>NENNI</ValueBar>
                    </FieldBox>
                    <FieldBox $w={109} $h={34} $ml={4}>
                      <FieldLabel $pt={0} $pl={6}>Nr. Civico</FieldLabel>
                      <ValueBar $w={82} $ml={12}>10</ValueBar>
                    </FieldBox>
                  </FieldRow>
                  <FieldRow $h={34} $mt={5}>
                    <FieldBox $w={320} $h={33} $ml={5}>
                      <FieldLabel $pl={2}>Frazione</FieldLabel>
                      <ValueBar $w={300} $ml={15} />
                    </FieldBox>
                    <InlineLabel $w={80} $ml={14} $pb={3}>Data Variazione</InlineLabel>
                    <FieldBox $w={119} $h={34} $ml={0} $pb={0}>
                      <DateHeads><span>mese</span><span>anno</span></DateHeads>
                      <DateTable>
                        <DateCell $w={60} $pl={6} $div><DateFill $w={53}>0</DateFill></DateCell>
                        <DateCell $w={48} $pl={6}><DateFill $w={40} /></DateCell>
                      </DateTable>
                    </FieldBox>
                    <FieldBox $w={67} $h={34} $ml={23}>
                      <FieldLabel $pl={0}>Cod.Comune</FieldLabel>
                      <ValueBar $w={40} $ml={9} />
                    </FieldBox>
                  </FieldRow>
                  <SectionBar $h={21} $pl={9}>Filtri</SectionBar>
                  <FilterRow>
                    <FilterLabel $w={42} $ml={10}>Addetto</FilterLabel>
                    <FilterCell $w={219} $pl={8}><FilterFill $w={192} /></FilterCell>
                    <FilterLabel $w={49} $ml={23}>Famiglia</FilterLabel>
                    <FilterCell $w={219} $pl={17}><FilterFill $w={200} /></FilterCell>
                    <FilterLabel $w={37} $ml={6}>Stato</FilterLabel>
                    <FilterCell $w={51} $pl={5}><FilterFill $w={30} $pl={10}>26</FilterFill></FilterCell>
                  </FilterRow>
                  <SectionBar $h={21} $pl={9}>Tipo di dichiarazione</SectionBar>
                  <TipoGrid>
                    {tipo.map((row, r) => (
                      <React.Fragment key={r}>
                        {row.map((item, c) => {
                          if (!item) return <TipoGap key="gap" />;
                          const [t, pl, dy, x] = item;
                          return (
                            <React.Fragment key={t}>
                              <TipoLabel $pl={pl} $dy={dy}>{t}</TipoLabel>
                              {t === "C.F. Società Consolidante"
                                ? <TipoBox $wide $a={12} $b={122} />
                                : <TipoBox $first={r === 0} $a={stripes[c][0]} $b={stripes[c][1]}>{x ? "X" : ""}</TipoBox>}
                            </React.Fragment>
                          );
                        })}
                      </React.Fragment>
                    ))}
                  </TipoGrid>
                </LeftCol>
                <Elenco>
                  <ElencoHead>Elenco Quadri<br />Compilati</ElencoHead>
                  <ElencoRows>
                    {elenco.map(([a, am, b, bm]) => (
                      <ElencoRow key={a}>
                        <CodeCell>{a}</CodeCell>
                        <MarkCell $close={!b}>{am ? "X" : ""}</MarkCell>
                        {b && <CodeCell>{b}</CodeCell>}
                        {b && <MarkCell $close>{bm ? "X" : ""}</MarkCell>}
                      </ElencoRow>
                    ))}
                  </ElencoRows>
                  <Legend $mt={4}>X=Compilato</Legend>
                  <Legend $mt={0}>C=Da Compilare</Legend>
                </Elenco>
              </Form>
            </Page>
            <Gutter $w={18} />
            <Tooltip>Compensazioni - Rimborsi</Tooltip>
          </Workspace>
          <HintBar>
            <svg width="13" height="16" viewBox="0 0 13 16"><circle cx="6.500" cy="6" r="5" fill="#ffff30" stroke="#333" /><path d="M5 11h3v3H5z" fill="#666" stroke="#222" /><path d="M5 6l1.500 2L8 6" fill="none" stroke="#555" /></svg>
            Premere F8 per visualizzare la TABELLA
          </HintBar>
          <DocTabs>
            <Slant $deg={18} />
            <DocTab>Frontespizio</DocTab>
            <Slant $deg={-18} />
            <DocTab>Notificazione degli Atti</DocTab>
            <Slant $deg={-18} />
          </DocTabs>
        </Main>
        <ScrollTrack>
          <ScrollBtn><Arrow /></ScrollBtn>
          <ScrollBtn><Arrow $down /></ScrollBtn>
        </ScrollTrack>
        <RightBar>
          {I.userCheck}{I.printer}{I.person}{I.noMail}{I.notes}{I.docBlack}{I.lock}{I.tree}{I.burst}{I.treeOff}
          <RightGap />
          {I.forkOff}
        </RightBar>
      </Body>
    </Window>
  );
}
